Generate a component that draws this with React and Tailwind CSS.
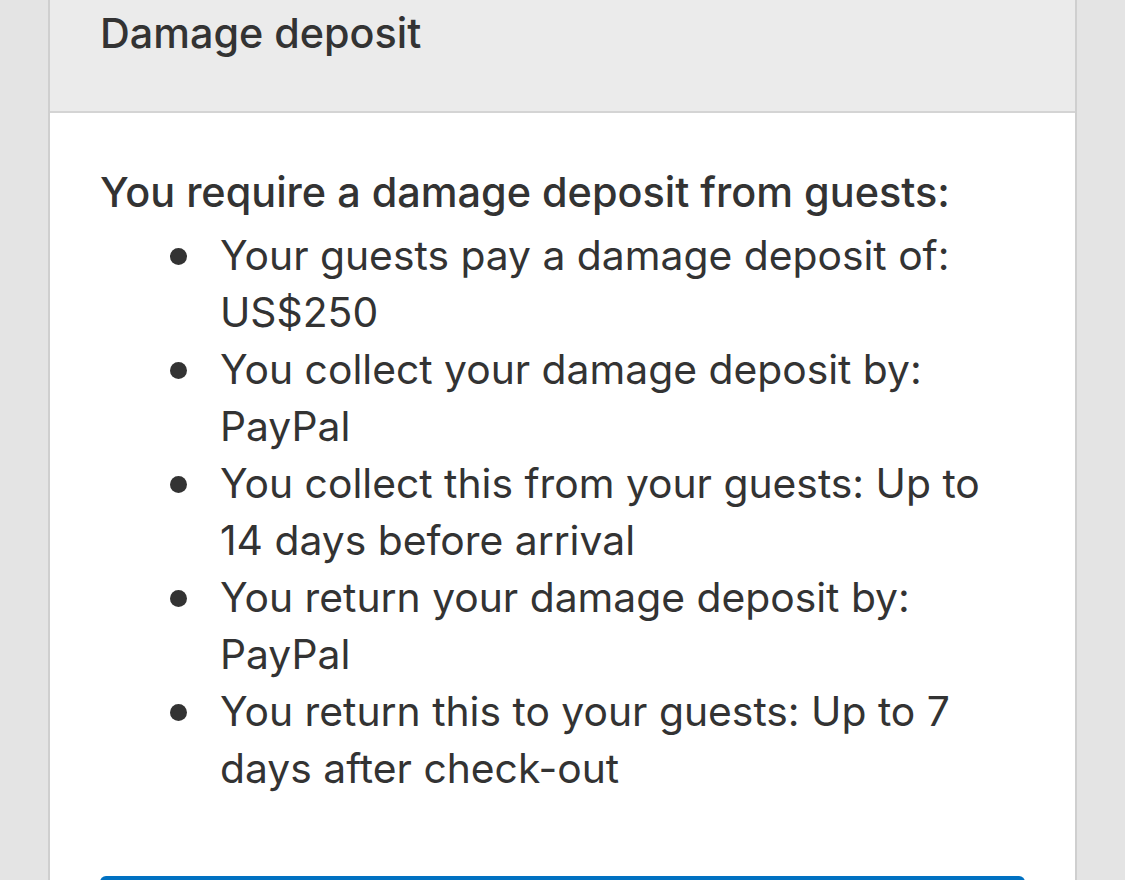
/**
 * App.jsx
 *
 * Damage deposit summary card (mobile listing settings view).
 */

const items = [
  ["Your guests pay a damage deposit of:", "US$250"],
  ["You collect your damage deposit by:", "PayPal"],
  ["You collect this from your guests: Up to", "14 days before arrival"],
  ["You return your damage deposit by:", "PayPal"],
  ["You return this to your guests: Up to 7", "days after check-out"],
];

/* ── Bullet row ─────────────────────────────────────────────── */
const Bullet = ({ lines }) => (
  <li className="flex">
    <div className="w-[120px] shrink-0 pl-[70px]">
      <span className="mt-[21px] block h-[17px] w-[17px] rounded-full bg-[#333333]" />
    </div>
    <div>
      {lines.map((line) => (
        <div key={line}>{line}</div>
      ))}
    </div>
  </li>
);

const App = () => {
  return (
    <div
      className="min-h-screen overflow-hidden bg-[#e4e4e4] px-[48px] text-[#333333]"
      style={{ fontFamily: "Inter, 'Noto Sans', sans-serif" }}
    >
      <div className="border-x-2 border-[#cfcfcf] bg-white">
        {/* Header */}
        <div className="border-b-2 border-[#d4d4d4] bg-[#ebebeb] px-[50px] pb-[49px] pt-[5px]">
          <h2 className="text-[41.3px] leading-[57px] font-medium">Damage deposit</h2>
        </div>

        {/* Body */}
        <div className="px-[50px] pt-[51px] text-[40.8px] leading-[57px]">
          <p className="text-[41.4px] font-medium">You require a damage deposit from guests:</p>
          <ul className="mt-[6px]">
            {items.map((lines) => (
              <Bullet key={lines[0]} lines={lines} />
            ))}
          </ul>

          {/* Primary action */}
          <button className="mt-[79px] h-[64px] w-full rounded-[6px] bg-[#0071c2]" />
        </div>
      </div>
    </div>
  );
};

export default App;
